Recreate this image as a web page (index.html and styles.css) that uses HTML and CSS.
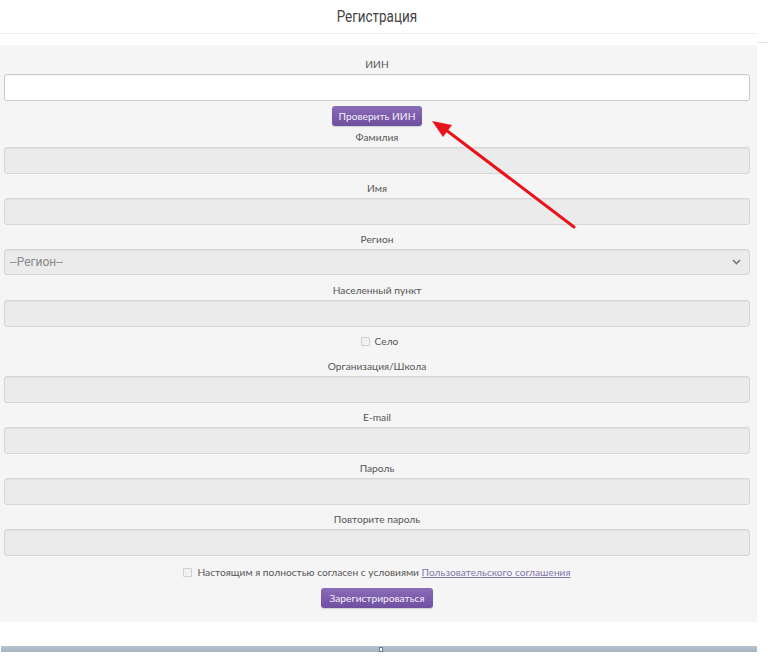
FILE: index.html
```html
<!DOCTYPE html>
<html lang="ru">
<head>
<meta charset="utf-8">
<title>Регистрация</title>
<link rel="stylesheet" href="styles.css">
</head>
<body>
<div class="page">
  <header class="head">
    <h1 class="title">Регистрация</h1>
  </header>
  <div class="side-tick"></div>
  <form class="panel">
    <label class="lbl">ИИН</label>
    <div class="inp inp-white"></div>
    <div class="btn-row"><button type="button" class="btn">Проверить ИИН</button></div>

    <label class="lbl">Фамилия</label>
    <div class="inp"></div>

    <label class="lbl">Имя</label>
    <div class="inp"></div>

    <label class="lbl">Регион</label>
    <div class="inp sel"><span class="sel-text">--Регион--</span>
      <svg class="chev" width="9" height="6" viewBox="0 0 9 6"><path d="M1 1l3.5 3.5L8 1" fill="none" stroke="#777" stroke-width="1.6"/></svg>
    </div>

    <label class="lbl">Населенный пункт</label>
    <div class="inp"></div>

    <div class="check-row"><span class="cb"></span><span>Село</span></div>

    <label class="lbl">Организация/Школа</label>
    <div class="inp"></div>

    <label class="lbl">E-mail</label>
    <div class="inp"></div>

    <label class="lbl">Пароль</label>
    <div class="inp"></div>

    <label class="lbl">Повторите пароль</label>
    <div class="inp"></div>

    <div class="agree"><span class="cb"></span><span>Настоящим я полностью согласен с условиями <a class="link">Пользовательского соглашения</a></span></div>
    <div class="btn-row btn-row-bottom"><button type="button" class="btn btn-reg">Зарегистрироваться</button></div>
  </form>
  <div class="bottom-bar"><span class="marker"></span></div>

  <svg class="arrow" width="768" height="658" viewBox="0 0 768 658">
    <line x1="574" y1="227" x2="446" y2="130" stroke="#e8141b" stroke-width="3" stroke-linecap="round"/>
    <polygon points="432,121 452,125 443,137" fill="#e8141b"/>
  </svg>
</div>
</body>
</html>
```
FILE: styles.css
```css
* { box-sizing: border-box; }
html, body { margin: 0; padding: 0; background: #fff; }
body {
  font-family: "Lato", "Open Sans", sans-serif;
  color: #555;
  width: 768px;
  height: 658px;
  overflow: hidden;
}
.page { position: relative; width: 768px; height: 658px; }
.head {
  width: 757px;
  height: 34px;
  border-bottom: 1px solid #efefef;
  display: flex;
  justify-content: center;
  align-items: center;
}
.title {
  margin: 0 0 0 -3px;
  font-family: "Roboto", sans-serif;
  font-weight: 400;
  font-size: 16px;
  color: #444;
  transform: scaleX(0.84);
}
.side-tick {
  margin-left: 757px;
  width: 11px;
  height: 1px;
  background: #e4e4e4;
  margin-top: 8px;
}
.panel {
  margin-top: 2px;
  width: 757px;
  height: 577px;
  background: #f5f5f5;
  padding: 10px 7px 0 4px;
  display: flex;
  flex-direction: column;
}
.lbl {
  display: block;
  text-align: center;
  font-size: 10.2px;
  line-height: 18px;
  height: 18px;
  color: #555;
  margin-bottom: 1px;
}
.inp {
  height: 27px;
  border: 1px solid #d6d6d6;
  border-radius: 3px;
  background: #ebebeb;
  margin-bottom: 5px;
  box-shadow: inset 0 1px 1px rgba(0,0,0,0.04);
}
.inp-white { background: #fff; border-color: #c9c9c9; }
.sel {
  height: 26px;
  display: flex;
  align-items: center;
  justify-content: space-between;
  padding: 0 8px 0 5px;
  margin-bottom: 6px;
}
.sel-text {
  font-family: "Roboto", sans-serif;
  font-size: 12px;
  color: #8a8a8a;
}
.chev { display: block; }
.btn-row { display: flex; justify-content: center; margin-bottom: 2px; }
.btn {
  font-family: "Lato", "Open Sans", sans-serif;
  font-size: 10.2px;
  color: #f4f0fa;
  border: 0;
  border-radius: 3px;
  height: 20px;
  padding: 0 7px;
  background: linear-gradient(#8b6cb8, #6f4f9f);
  box-shadow: 0 1px 1px rgba(0,0,0,0.15);
  cursor: pointer;
}
.btn-reg { padding: 0 9px; }
.check-row, .agree {
  display: flex;
  justify-content: center;
  align-items: center;
  font-size: 10.2px;
  line-height: 18px;
  height: 18px;
  gap: 5px;
}
.check-row { margin-bottom: 7px; padding-left: 5px; }
.agree { margin-top: 2px; margin-bottom: 7px; }
.cb {
  width: 9px;
  height: 9px;
  border: 1px solid #d0d0d0;
  background: #f2f2f2;
  border-radius: 1px;
  display: inline-block;
}
.link { color: #8577ae; text-decoration: underline; }
.bottom-bar {
  position: relative;
  margin-top: 24px;
  margin-left: 1px;
  width: 756px;
  height: 6px;
  background: linear-gradient(#b7c4d2, #a4b3c3);
}
.marker {
  position: absolute;
  left: 378px;
  top: 1px;
  width: 4px;
  height: 5px;
  background: #fff;
  border: 1px solid #6b7785;
}
.arrow { position: absolute; left: 0; top: 0; pointer-events: none; }
```
